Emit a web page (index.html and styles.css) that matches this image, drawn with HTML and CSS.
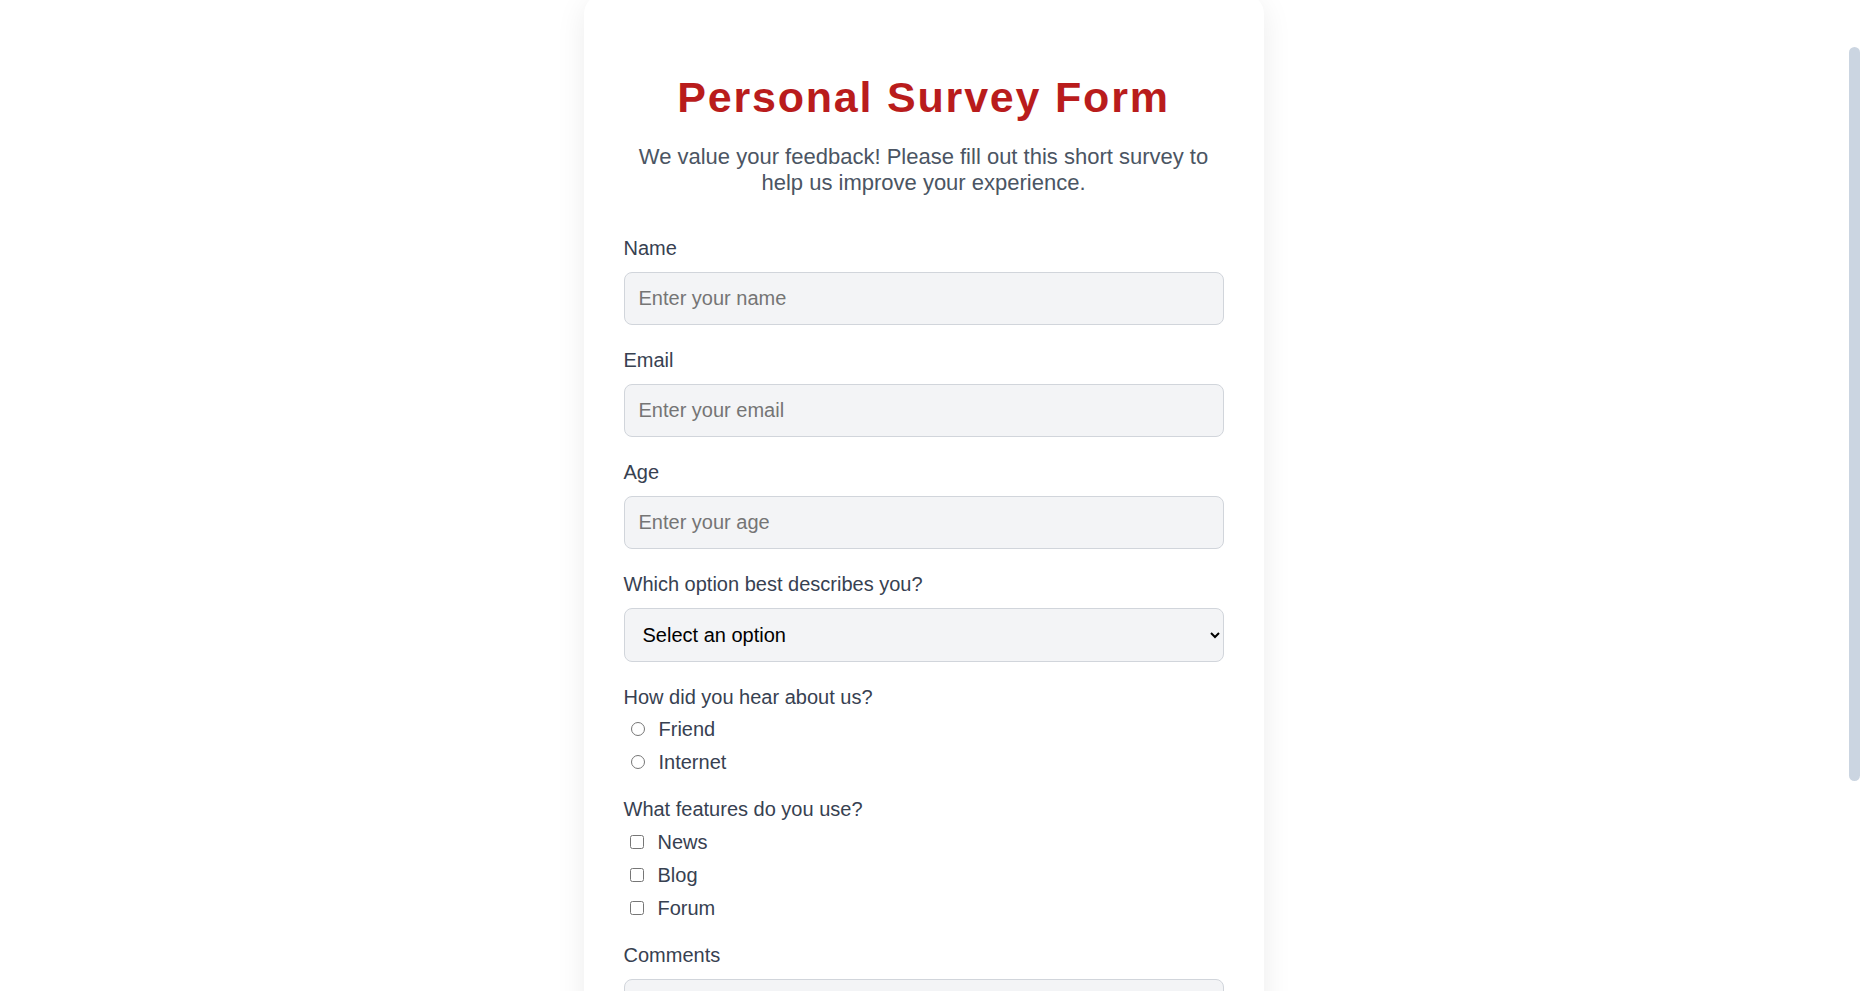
FILE: index.html
```html
<!DOCTYPE html>
<html lang="en">

<head>
    <meta charset="UTF-8">
    <meta name="viewport" content="width=device-width, initial-scale=1.0">
    <title>Personal Survey Form</title>
    <link rel="stylesheet" href="styles.css">
</head>

<body>

    <!-- Survey card -->
    <div class="survey-card">
        <h1 class="survey-title">Personal Survey Form</h1>
        <p class="survey-description">We value your feedback! Please fill out this short survey to help us improve your experience.</p>

        <form class="survey-form" id="surveyForm">
            <div class="form-group">
                <label for="name">Name</label>
                <input type="text" id="name" placeholder="Enter your name">
            </div>

            <div class="form-group">
                <label for="email">Email</label>
                <input type="email" id="email" placeholder="Enter your email">
            </div>

            <div class="form-group">
                <label for="age">Age</label>
                <input type="number" id="age" placeholder="Enter your age">
            </div>

            <div class="form-group">
                <label for="role">Which option best describes you?</label>
                <select id="role">
                    <option value="">Select an option</option>
                    <option value="student">Student</option>
                    <option value="professional">Professional</option>
                    <option value="other">Other</option>
                </select>
            </div>

            <div class="form-group">
                <p class="group-label">How did you hear about us?</p>
                <div class="options">
                    <label class="option"><input type="radio" name="source" value="friend">Friend</label>
                    <label class="option"><input type="radio" name="source" value="internet">Internet</label>
                </div>
            </div>

            <div class="form-group features">
                <p class="group-label">What features do you use?</p>
                <div class="options">
                    <label class="option"><input type="checkbox" value="news">News</label>
                    <label class="option"><input type="checkbox" value="blog">Blog</label>
                    <label class="option"><input type="checkbox" value="forum">Forum</label>
                </div>
            </div>

            <div class="form-group">
                <label for="comments">Comments</label>
                <textarea id="comments" rows="4" placeholder="Enter your comments here..."></textarea>
            </div>

            <button type="submit" class="submit-button">Submit</button>
        </form>
    </div>

    <!-- Scrollbar thumb (the window's own bar is hidden) -->
    <div class="scroll-thumb"></div>

    <script>
        window.scrollTo(0, 63);
    </script>

</body>

</html>
```

FILE: styles.css
```css
* {
    box-sizing: border-box;
}

body {
    margin: 0;
    padding: 57px 33px 60px 20px;
    font-family: "Liberation Sans", Arial, sans-serif;
    background-color: #ffffff;
    color: #374151;
}

/* Scrollbar */
.scroll-thumb {
    position: fixed;
    top: 47px;
    right: 0;
    width: 11px;
    height: 734px;
    background-color: #cbd5e1;
    border-radius: 6px;
}

/* Card */
.survey-card {
    max-width: 680px;
    margin: 0 auto;
    background-color: white;
    border-radius: 20px;
    padding: 50px 40px 40px;
    box-shadow: 0 8px 30px rgba(0, 0, 0, 0.08);
}

.survey-title {
    margin: 29px 0 22px;
    text-align: center;
    font-size: 43px;
    font-weight: bold;
    letter-spacing: 1.8px;
    color: #b91c1c;
}

.survey-description {
    margin: 0 0 40px;
    text-align: center;
    font-size: 22px;
    line-height: 1.2;
    color: #4b5563;
}

/* Form */
.form-group {
    margin-bottom: 24px;
}

.form-group > label {
    display: block;
    margin-bottom: 12px;
    font-size: 20px;
}

.group-label {
    margin: 0 0 9px;
    font-size: 20px;
}

.features .group-label {
    margin-bottom: 10px;
}

.form-group input[type="text"],
.form-group input[type="email"],
.form-group input[type="number"],
.form-group select,
.form-group textarea {
    display: block;
    width: 100%;
    padding: 14px;
    font-family: inherit;
    font-size: 20px;
    background-color: #f3f4f6;
    border: 1px solid #d1d5db;
    border-radius: 8px;
}

.form-group select {
    color: black;
}

.form-group textarea {
    resize: vertical;
}

.options {
    display: flex;
    flex-direction: column;
    gap: 10px;
    margin-bottom: 2px;
}

.option {
    display: flex;
    align-items: center;
    font-size: 20px;
}

.option input[type="radio"] {
    width: 14px;
    height: 14px;
    margin: 0 14px 0 7px;
}

.option input[type="checkbox"] {
    width: 14px;
    height: 14px;
    margin: 0 14px 0 6px;
}

.submit-button {
    width: 100%;
    padding: 14px;
    font-family: inherit;
    font-size: 20px;
    font-weight: bold;
    color: white;
    background-color: #b91c1c;
    border: none;
    border-radius: 8px;
    cursor: pointer;
}

.submit-button:hover {
    background-color: #991b1b;
}
```
